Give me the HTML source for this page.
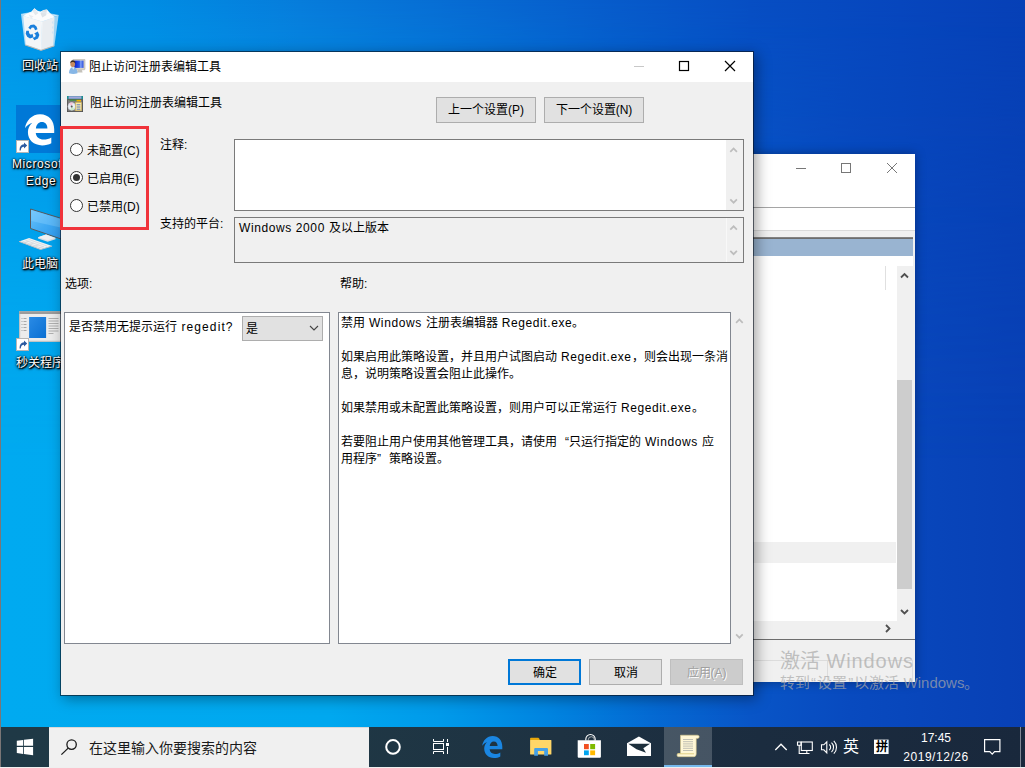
<!DOCTYPE html>
<html lang="zh-CN">
<head>
<meta charset="utf-8">
<title>阻止访问注册表编辑工具</title>
<style>
*{box-sizing:border-box;margin:0;padding:0}
html,body{width:1025px;height:768px;overflow:hidden}
body{position:relative;font-family:"Liberation Sans",sans-serif;font-size:12px;line-height:16px;color:#000;background:#0a50c0}
.abs{position:absolute}
.t{position:absolute;white-space:nowrap;line-height:16px;height:16px}
/* desktop */
#desk{position:absolute;left:0;top:0;width:1025px;height:768px;overflow:hidden;
 background:linear-gradient(90deg,#00aaf0 0,#00a8ef 330px,#009aea 440px,#0084e0 550px,#046ad3 650px,#0855c7 750px,#084abf 850px,#0840b5 1025px)}
#desk .top{position:absolute;left:0;top:0;width:1025px;height:768px;
 background:linear-gradient(90deg,#0096e8 0,#008ce3 150px,#067cdb 300px,#066cd3 450px,#065ccb 600px,#064ec3 750px,#0646bd 900px,#0640b6 1025px);
 -webkit-mask-image:linear-gradient(180deg,#000 0,rgba(0,0,0,.62) 120px,rgba(0,0,0,.2) 300px,transparent 460px);mask-image:linear-gradient(180deg,#000 0,rgba(0,0,0,.62) 120px,rgba(0,0,0,.2) 300px,transparent 460px)}
.dlabel{position:absolute;color:#fff;font-size:12px;line-height:14px;text-align:center;white-space:nowrap;
 text-shadow:1px 1px 1px #000,1px 1px 2px #000,0 0 2px #000,0 1px 3px rgba(0,0,0,.9)}
/* background window */
#bgwin{position:absolute;left:700px;top:154px;width:215px;height:528px;background:#fff;overflow:hidden;box-shadow:0 0 10px rgba(0,0,0,.35)}
/* dialog */
#dlg{position:absolute;left:60px;top:51px;width:694px;height:645px;background:#f0f0f0;background-clip:padding-box;border:1px solid rgba(8,18,30,.62);
 box-shadow:3px 3px 13px rgba(0,0,0,.36)}
#dlg .title{position:absolute;left:0;top:0;width:692px;height:30px;background:#fff}
.btn{position:absolute;height:26px;background:#e1e1e1;border:1px solid #adadad;text-align:center;line-height:24px;white-space:nowrap}
.box{position:absolute;background:#fff;border:1px solid #828790}
.radio{position:absolute;width:13px;height:13px;border:1px solid #333;border-radius:50%;background:#fff}
.radio.on:after{content:"";position:absolute;left:2px;top:2px;width:7px;height:7px;border-radius:50%;background:#333}
.sb{position:absolute;background:#f0f0f0}
.help{position:absolute;white-space:nowrap;line-height:17px}
.help div{height:17px}
.l{letter-spacing:.6px}
.q{display:inline-block;width:12px}
.wq{display:inline-block;width:7.2px;text-align:center}
.wm{position:absolute;white-space:nowrap;color:rgba(168,168,168,.7)}
/* taskbar */
#tb{position:absolute;left:1px;top:727px;width:1024px;height:40px;
 background:linear-gradient(90deg,#1f3946 0,#1f3845 300px,#1e3242 560px,#1b2c3f 760px,#19283c 1024px)}
</style>
</head>
<body>
<div id="desk"><div class="top"></div></div>

<!-- desktop icons -->
<svg class="abs" style="left:0;top:0" width="70" height="360" viewBox="0 0 70 360">
 <defs>
  <linearGradient id="scr" x1="0" y1="0" x2="1" y2="1"><stop offset="0" stop-color="#6cc4fb"/><stop offset=".5" stop-color="#3fa9f3"/><stop offset="1" stop-color="#2b95ea"/></linearGradient>
  <linearGradient id="appb" x1="0" y1="0" x2="1" y2="1"><stop offset="0" stop-color="#2a8be6"/><stop offset="1" stop-color="#0a6fd2"/></linearGradient>
 </defs>
 <!-- recycle bin -->
 <g>
  <path d="M21 14.300L37 11.400L58.600 15.400L42.100 20.600Z" fill="#e3f2fc" fill-opacity=".85"/>
  <path d="M21 14.300L42.100 20.600L41 50.500L24.900 44.900Z" fill="#d4ebfb" fill-opacity=".8"/>
  <path d="M42.100 20.600L58.600 15.400L54.400 45.900L41 50.500Z" fill="#c4e3f8" fill-opacity=".8"/>
  <path d="M23.300 16L42 21.500L41 49.800L25.800 44.600Z" fill="#f4f6f8"/>
  <path d="M42 21.500L54.500 17.300L53.300 45.500L41 49.800Z" fill="#e9edf1"/>
  <path d="M53.500 20l-1.800 2.500l1.800 2.500l-1.800 2.500l1.800 2.500l-1.800 2.500l1.800 2.500v-15z" fill="#cfe4f4"/>
  <path d="M23.300 16L26.500 13.800L31.500 11.500L34.500 8.200L37.200 10.600L40.200 11.800L43.200 10.200L47 9.600L50 13L54.500 17.300L42 21.500Z" fill="#fbfcfd"/>
  <path d="M32.500 10.800L34.500 8.200L38.300 13.200L35.300 15.200Z" fill="#e3e8ec"/>
  <path d="M43.200 10L47 9.600L46.200 15.200L42.300 17.400L40.500 13.500Z" fill="#dde3e8"/>
  <path d="M28.500 14.500l5 1.800l-2.500 2.200z" fill="#e8ecf0"/>
  <path d="M21 14.300L37 11.400L58.600 15.400" stroke="#e6f3fc" stroke-opacity=".8" stroke-width=".7" fill="none"/>
  <path d="M42.100 21.500L41 50" stroke="#fff" stroke-opacity=".7" stroke-width=".7"/>
  <path d="M25 44.900L41 50.400L54.400 45.900" stroke="#cdb7a6" stroke-width=".9" fill="none"/>
  <g fill="#1a7fdc">
   <path d="M28.300 27.800l2.200-2.800l3.600-.4l2.400 2l1 2.600l-2.400 1l-1.200-2.400l-2-.2l-1.400 1.800z"/>
   <path d="M37.800 31.500l1.600 3.400l-1.400 3.600l-3.600 1.700l-1.800-2.400l2.600-.9l.6-1.900l-1.600-1.600z"/>
   <path d="M26.300 30.700l2.500.1l.4 2.400l1.600 1.500l1.700-.9l.9 3.400l-3.400 1.300l-2.800-1.800l-1.500-3z"/>
  </g>
 </g>
 <!-- edge tile -->
 <rect x="16" y="105" width="48" height="48" fill="#0078d7"/>
 <path fill="#fff" fill-rule="evenodd" transform="translate(25 114.300) scale(1.453 1.414) translate(-482.200 -736)" d="M482.200 745.800C483 740.500 487 736 492.600 736C498.600 736 502.300 740.600 502.300 746.600V749.300H489.600C489.900 752.300 492 753.900 495 753.900C497 753.900 498.800 753.400 500.300 752.400V756.500C498.600 757.500 496.400 758 494 758C488.200 758 484.200 754.300 484.200 748.600C484.200 745.800 485.300 743.600 487.200 741.900C485 742.600 483.300 744 482.200 745.800ZM489.700 746H497.600C497.600 743.300 496.200 741.500 493.800 741.500C491.600 741.500 490 743.300 489.700 746Z"/>
 <rect x="16.500" y="140.500" width="12" height="12" fill="#fff" stroke="#b5b5b5" stroke-width="1"/>
 <path d="M19.500 150.500c0-4 1.500-6 4.500-6.200v-1.800l3.200 3l-3.200 3v-1.800c-1.800 0-3 .9-3.300 3.800z" fill="#2c5aa0"/>
 <!-- this pc -->
 <path d="M30.500 209L64 219.200V240L30.500 228.500Z" fill="url(#scr)" stroke="#565a5e" stroke-width="1"/>
 <path d="M31.200 210L63 219.800V228L31.200 221Z" fill="#8fd3ff" fill-opacity=".35"/>
 <path d="M38 237.300l8-2.800l9.500 3.400v1.300l-7.800 2.500l-9.700-3.200z" fill="#d9dde1"/>
 <path d="M38 237.300l8-2.800l9.500 3.400l-7.800 2.400z" fill="#eef0f2"/>
 <path d="M19 241.400L29.100 238L52.100 246.100L40.600 249.500Z" fill="#eef1f3"/>
 <path d="M19 241.400L40.600 249.500L52.100 246.100" stroke="#b8bec4" stroke-width="1" fill="none"/>
 <path d="M22.500 241.300l18.500 6.700M25.500 240.300l18.500 6.700M28.500 239.300l18.500 6.700M24 242.800l4.500-1.500M29 244.600l4.500-1.500M34 246.400l4.500-1.500M39 248.200l4.500-1.500" stroke="#c9cfd4" stroke-width=".6"/>
 <!-- app icon -->
 <rect x="19.200" y="311.200" width="44" height="30.600" fill="#ececec"/>
 <rect x="19.200" y="311.200" width="44" height="2.800" fill="#9b9b9b"/>
 <path d="M19.700 314v27.300h43" stroke="#bdbdbd" stroke-width="1" fill="none"/>
 <rect x="29.100" y="317" width="17" height="21" fill="url(#appb)"/>
 <path d="M21.500 318.500h5M21.500 321.500h5M21.500 324.500h5M21.500 327.500h5M21.500 330.500h5" stroke="#a9a9a9" stroke-width="1" stroke-dasharray="1 1 4 0"/>
 <path d="M48.500 318.500h10M48.500 321h10M48.500 323.500h10M48.500 326h10M48.500 328.500h10M48.500 331h10M48.500 333.500h5" stroke="#a9a9a9" stroke-width=".9"/>
 <rect x="16.500" y="338.500" width="12" height="12" fill="#fff" stroke="#b5b5b5" stroke-width="1"/>
 <path d="M19.500 348.500c0-4 1.500-6 4.500-6.200v-1.800l3.200 3l-3.200 3v-1.800c-1.800 0-3 .9-3.300 3.800z" fill="#2c5aa0"/>
</svg>
<!-- desktop icon labels -->
<div class="dlabel" style="left:0;top:59px;width:80px">回收站</div>
<div class="dlabel" style="left:-2px;top:157px;width:82px;letter-spacing:.6px">Microsoft</div>
<div class="dlabel" style="left:0;top:174px;width:82px;letter-spacing:.6px">Edge</div>
<div class="dlabel" style="left:0;top:257px;width:80px">此电脑</div>
<div class="dlabel" style="left:0;top:356px;width:80px">秒关程序</div>

<!-- background MMC window -->
<div id="bgwin">
 <svg class="abs" style="left:0;top:0" width="215" height="30" viewBox="0 0 215 30">
  <path d="M96 14.5h10" stroke="#777" stroke-width="1" fill="none"/>
  <rect x="141.5" y="9.5" width="9" height="9" stroke="#777" stroke-width="1" fill="none"/>
  <path d="M187 9l10 10M197 9l-10 10" stroke="#777" stroke-width="1" fill="none"/>
 </svg>
 <div class="abs" style="left:0;top:53px;width:215px;height:1px;background:#a5a5a5"></div>
 <div class="abs" style="left:0;top:76px;width:215px;height:1px;background:#dadada"></div>
 <div class="abs" style="left:0;top:77px;width:215px;height:7px;background:#f0f0f0"></div>
 <div class="abs" style="left:0;top:83px;width:213px;height:1px;background:#828282"></div>
 <div class="abs" style="left:0;top:84px;width:213px;height:1px;background:#6d6d6d"></div>
 <div class="abs" style="left:0;top:85px;width:213px;height:17px;background:#99b4d1"></div>
 <div class="abs" style="left:213px;top:77px;width:2px;height:450px;background:#f0f0f0"></div>
 <div class="abs" style="left:185px;top:112px;width:1px;height:24px;background:#e0e0e0"></div>
 <!-- v scrollbar -->
 <div class="abs" style="left:197px;top:112px;width:16px;height:355px;background:#f0f0f0"></div>
 <div class="abs" style="left:197px;top:226px;width:15px;height:209px;background:#cdcdcd"></div>
 <svg class="abs" style="left:197px;top:112px" width="16" height="355" viewBox="0 0 16 355"><path d="M4 11.5l3.5-3.5l3.5 3.5M4 344l3.5 3.5l3.5-3.5" stroke="#505050" stroke-width="1.8" fill="none"/></svg>
 <div class="abs" style="left:0;top:388px;width:196px;height:21px;background:#f0f0f0"></div>
 <!-- h scrollbar -->
 <div class="abs" style="left:0;top:467px;width:215px;height:18px;background:#f0f0f0"></div>
 <svg class="abs" style="left:183px;top:468px" width="12" height="14" viewBox="0 0 12 14"><path d="M3 3l3.5 3.5l-3.5 3.5" stroke="#505050" stroke-width="1.8" fill="none"/></svg>
 <div class="abs" style="left:0;top:485px;width:215px;height:1px;background:#6d6d6d"></div>
 <div class="abs" style="left:0;top:486px;width:215px;height:42px;background:#f0f0f0"></div>
 <div class="abs" style="left:0;top:506px;width:213px;height:1px;background:#dcdcdc"></div>
 <div class="abs" style="left:127px;top:506px;width:1px;height:21px;background:#dcdcdc"></div>
 <div class="abs" style="left:212px;top:506px;width:1px;height:21px;background:#dcdcdc"></div>
</div>

<!-- dialog -->
<div id="dlg">
 <div class="title"></div>
 <div class="t" style="left:28px;top:7px">阻止访问注册表编辑工具</div>
 <!-- title icon (user + monitor) -->
 <svg class="abs" style="left:8px;top:7px" width="17" height="16" viewBox="69 59 17 16">
  <defs><linearGradient id="tsc" x1="0" y1="0" x2="1" y2="0"><stop offset="0" stop-color="#0a1fd0"/><stop offset=".55" stop-color="#2a55e8"/><stop offset=".7" stop-color="#7fa0f5"/><stop offset="1" stop-color="#2448dc"/></linearGradient></defs>
  <rect x="72.800" y="59.200" width="12.200" height="10.600" rx=".8" fill="#d6d3cb" stroke="#a9a69d" stroke-width=".5"/>
  <rect x="74.200" y="60.600" width="9.300" height="7.300" fill="url(#tsc)"/>
  <path d="M77.600 69.800h4.200l.8 2.600h-5.800z" fill="#c4c2bb"/>
  <path d="M69 73.300c0-3.700 1.600-6 4.200-6.500c2.700.5 4.300 2.800 4.300 6.500q-4.200 1.400-8.500 0z" fill="#86b6e6"/>
  <path d="M72 67.300l1.200 2.500l1.300-2.500z" fill="#e8f1fb"/>
  <ellipse cx="72.700" cy="64.100" rx="2.400" ry="2.900" fill="#c78b5e"/>
  <path d="M70.200 63.600c0-2.200 1.200-3.300 2.700-3.300c1.600 0 2.600 1.200 2.500 3.100c-.8-1-2-1.500-3.100-1.400c-.9.100-1.700.7-2.100 1.600z" fill="#3a2a20"/>
 </svg>
 <!-- policy icon -->
 <svg class="abs" style="left:6px;top:44px" width="16" height="16" viewBox="67 96 16 16">
  <rect x="67" y="96" width="16" height="3.200" fill="#1d8c8c"/>
  <rect x="68.600" y="96.300" width="12.800" height="2.400" fill="#a4a4dc"/>
  <rect x="67.400" y="99.600" width="15.200" height="12" fill="#7c7c7c" stroke="#4e4e4e" stroke-width=".9"/>
  <rect x="69.500" y="99.600" width="11" height="1.100" fill="#3b9a3b"/>
  <rect x="76.500" y="99.900" width="4.500" height="1.600" fill="#f2b400"/>
  <circle cx="71.700" cy="106.400" r="3.800" fill="#e6f0f4" stroke="#b8b8c8" stroke-width=".5"/>
  <path d="M71.700 106.400L69 103.800A3.800 3.800 0 0 1 73 102.800Z" fill="#f4c6dc"/>
  <path d="M71.700 106.400L74.500 109A3.800 3.800 0 0 1 70.400 110Z" fill="#c9ecc9"/>
  <circle cx="71.700" cy="106.400" r="1" fill="#555"/>
  <rect x="75.400" y="102.400" width="6.200" height="8.400" fill="#fbe9a6" stroke="#c9a94a" stroke-width=".5"/>
  <path d="M76.600 104.800h3.800M76.600 107h3.800M76.600 109.200h3.800" stroke="#4a6fc4" stroke-width=".9"/>
 </svg>
 <!-- caption buttons -->
 <svg class="abs" style="left:560px;top:0" width="131" height="30" viewBox="0 0 131 30">
  <path d="M13 14.5h10" stroke="#c8c8c8" stroke-width="1" fill="none"/>
  <rect x="58.5" y="9.5" width="9" height="9" stroke="#000" stroke-width="1.2" fill="none"/>
  <path d="M104 9l10 10M114 9l-10 10" stroke="#000" stroke-width="1.2" fill="none"/>
 </svg>
 <div class="t" style="left:29px;top:43px">阻止访问注册表编辑工具</div>
 <div class="btn" style="left:375px;top:45px;width:100px">上一个设置(P)</div>
 <div class="btn" style="left:483px;top:45px;width:100px">下一个设置(N)</div>
 <!-- radios -->
 <div class="radio" style="left:9px;top:91px"></div><div class="t" style="left:26px;top:91px">未配置(C)</div>
 <div class="radio on" style="left:9px;top:119px"></div><div class="t" style="left:26px;top:119px">已启用(E)</div>
 <div class="radio" style="left:9px;top:147px"></div><div class="t" style="left:26px;top:147px">已禁用(D)</div>
 <div class="t" style="left:99px;top:85px">注释:</div>
 <div class="box" style="left:173px;top:87px;width:510px;height:72px;border-color:#7a7a7a">
  <div class="sb" style="right:0;top:0;width:17px;height:70px">
   <svg width="17" height="70" viewBox="0 0 17 70"><path d="M4.3 11.9L7.6 8.5L10.9 11.9M4.3 59.3L7.6 62.7L10.9 59.3" stroke="#bdbdbd" stroke-width="1.7" fill="none"/></svg>
  </div>
 </div>
 <div class="t" style="left:99px;top:164px">支持的平台:</div>
 <div class="box" style="left:173px;top:165px;width:510px;height:46px;background:#f0f0f0;border-color:#7a7a7a">
  <div class="sb" style="right:0;top:0;width:17px;height:44px;box-shadow:inset 1px 0 #f8f8f8">
   <svg width="17" height="44" viewBox="0 0 17 44"><path d="M4.3 11.7L7.6 8.3L10.9 11.7M4.3 32.8L7.6 36.2L10.9 32.8" stroke="#bdbdbd" stroke-width="1.7" fill="none"/></svg>
  </div>
 </div>
 <div class="t" style="left:178px;top:168px"><span class="l">Windows 2000 </span>及以上版本</div>
 <div class="t" style="left:4px;top:224px">选项:</div>
 <div class="t" style="left:279px;top:224px">帮助:</div>
 <div class="box" style="left:3px;top:260px;width:266px;height:332px"></div>
 <div class="t" style="left:8px;top:267px">是否禁用无提示运行<span class="l" style="letter-spacing:1.1px"> regedit?</span></div>
 <div class="abs" style="left:181px;top:264px;width:81px;height:25px;background:#e1e1e1;border:1px solid #adadad"></div>
 <div class="t" style="left:185px;top:269px">是</div>
 <svg class="abs" style="left:248px;top:272px" width="10" height="8" viewBox="0 0 10 8"><path d="M1 2l4 4l4-4" stroke="#444" stroke-width="1.1" fill="none"/></svg>
 <div class="box" style="left:277px;top:260px;width:393px;height:332px"></div>
 <svg class="abs" style="left:670px;top:260px" width="17" height="331" viewBox="0 0 17 331"><path d="M5.1 10.9L8.4 7.5L11.7 10.9M5.1 322.3L8.4 325.7L11.7 322.3" stroke="#bdbdbd" stroke-width="1.7" fill="none"/></svg>
 <div class="help" style="left:280px;top:263px">
  <div>禁用<span class="l"> Windows </span>注册表编辑器<span class="l"> Regedit.exe</span>。</div>
  <div>&nbsp;</div>
  <div>如果启用此策略设置，并且用户试图启动<span class="l"> Regedit.exe</span>，则会出现一条消</div>
  <div>息，说明策略设置会阻止此操作。</div>
  <div>&nbsp;</div>
  <div>如果禁用或未配置此策略设置，则用户可以正常运行<span class="l"> Regedit.exe</span>。</div>
  <div>&nbsp;</div>
  <div>若要阻止用户使用其他管理工具，请使用<span class="q" style="text-align:right">“</span>只运行指定的<span class="l"> Windows </span>应</div>
  <div>用程序<span class="q" style="text-align:left">”</span>策略设置。</div>
 </div>
 <div class="btn" style="left:447px;top:607px;width:73px;border:2px solid #0078d7;line-height:22px;padding-top:1px">确定</div>
 <div class="btn" style="left:528px;top:607px;width:73px;padding-top:1px">取消</div>
 <div class="btn" style="left:609px;top:607px;width:73px;background:#cccccc;border-color:#bfbfbf;color:#a0a0a0;text-shadow:1px 1px 0 #fff;padding-top:1px">应用(A)</div>
</div>
<!-- red annotation box -->
<div class="abs" style="left:60px;top:126px;width:89px;height:104px;border:3px solid #f0333a"></div>

<!-- activation watermark -->
<div class="wm" style="left:780px;top:649px;font-size:20px;line-height:24px;height:24px">激活<span style="letter-spacing:.9px"> Windows</span></div>
<div class="wm" style="left:780px;top:673px;font-size:15px;line-height:20px;height:20px">转到<span class="wq">“</span>设置<span class="wq">”</span>以激活 Windows。</div>
<!-- taskbar -->
<div id="tb">
 <div class="abs" style="left:48px;top:0;width:320px;height:40px;background:#f0f0f0;border-top:1px solid #d9d9d9"></div>
 <div class="t" style="left:88px;top:12px;font-size:14px;line-height:18px;height:18px;color:#1a1a1a">在这里输入你要搜索的内容</div>
 <div class="abs" style="left:663px;top:0;width:48px;height:40px;background:rgba(255,255,255,.19)"></div>
 <div class="abs" style="left:663px;top:38px;width:48px;height:2px;background:#76b9ed"></div>
 <svg class="abs" style="left:0;top:0" width="1024" height="40" viewBox="1 727 1024 40">
  <!-- start -->
  <g fill="#fff">
   <path d="M16.8 740.7L23.1 739.9V745.7H16.8Z"/><path d="M23.9 739.8L33.1 738.7V745.7H23.9Z"/>
   <path d="M16.8 747H23.1V754L16.8 752.9Z"/><path d="M23.9 747H33.1V755.3L23.9 754.1Z"/>
  </g>
  <!-- search icon -->
  <g stroke="#1a1a1a" stroke-width="1.3" fill="none"><circle cx="71.6" cy="744.6" r="4.7"/><path d="M68.2 748.1L61.4 754.6"/></g>
  <!-- cortana -->
  <circle cx="393" cy="746.9" r="6.8" stroke="#fff" stroke-width="2" fill="none"/>
  <!-- task view -->
  <g stroke="#fff" stroke-width="1" fill="none"><path d="M433.500 739v2.500h10v-2.500M433.500 754v-2.500h10v2.500M447.500 739v3M447.500 747v7"/><rect x="433.500" y="743.500" width="10" height="6"/></g>
  <rect x="446" y="743" width="3" height="3" fill="#fff"/>
  <!-- edge -->
  <path fill="#1a86e2" fill-rule="evenodd" d="M482.200 745.800C483 740.500 487 736 492.600 736C498.600 736 502.300 740.600 502.300 746.600V749.300H489.600C489.900 752.300 492 753.900 495 753.900C497 753.900 498.800 753.400 500.300 752.400V756.500C498.600 757.500 496.400 758 494 758C488.200 758 484.200 754.300 484.200 748.600C484.200 745.800 485.300 743.600 487.200 741.900C485 742.600 483.300 744 482.200 745.800ZM489.700 746H497.600C497.600 743.300 496.200 741.500 493.800 741.500C491.600 741.500 490 743.300 489.700 746Z"/>
  <!-- explorer -->
  <path fill="#e8a80c" d="M530.100 738.600q0-.8.800-.8h7.500l1.200 1.300v1.600h-9.500z"/>
  <rect x="530.100" y="740.100" width="21.300" height="14.500" rx=".5" fill="#ffd668"/>
  <path fill="#45a0e6" d="M534.200 749q0-1.100 1.100-1.100h11.600q1.100 0 1.100 1.100v6.800h-3.800v-4.900h-6.300v4.900h-3.700z"/>
  <!-- store -->
  <path d="M585.800 740.500v-1.300a4.700 4.700 0 0 1 9.400 0v1.300" stroke="#fff" stroke-width="1.100" fill="none"/>
  <path d="M588.300 740.500v-.8a3 3 0 0 1 6 0v.8" stroke="#c9c9c9" stroke-width=".8" fill="none"/>
  <path fill="#fff" d="M577.700 740.300h23.200v16.500q0 1-1 1h-21.200q-1 0-1-1z"/>
  <rect x="584" y="744" width="4.800" height="5.200" fill="#f25022"/><rect x="590.200" y="744" width="4.900" height="5.200" fill="#7fba00"/>
  <rect x="584" y="750.400" width="4.800" height="4.800" fill="#00a4ef"/><rect x="590.200" y="750.400" width="4.900" height="4.800" fill="#ffb900"/>
  <!-- mail -->
  <path fill="#fff" d="M627 743.300L638.900 736.600L651 743.300V755.900H627Z"/>
  <path fill="#1d2f3c" d="M628.300 743.700H650L643.300 748.300L646 752.800L636.500 749.200Z"/>
  <!-- scroll (active app) -->
  <path fill="#fff7d6" stroke="#d8c98a" stroke-width=".6" d="M680.500 735.200h17q1.700 0 1.700 1.600t-1.700 1.600h-1.300v15.500q0 2.800-2.600 2.800h-15.100q-1.500 0-1.500-1.600t1.500-1.600h2z"/>
  <path d="M683 739.500h10M683 741.700h10M683 743.900h10M683 746.100h10M683 748.300h10M683 750.500h10" stroke="#b9b9b0" stroke-width=".9"/>
  <path d="M677.600 753.800h16.500" stroke="#e0cf85" stroke-width="1"/>
  <!-- tray chevron -->
  <path d="M775.300 750L781 744.200L786.700 750" stroke="#fff" stroke-width="1.300" fill="none"/>
  <!-- network -->
  <g stroke="#fff" stroke-width="1.100" fill="none"><rect x="801.300" y="742" width="11" height="8.500"/><path d="M806.800 750.500v3M802 753.500h7.500M797.500 742h3.500v3.300h-3.500zM799.200 745.300v8.200h3"/></g>
  <!-- volume -->
  <g stroke="#fff" stroke-width="1.100" fill="none"><path d="M821.500 744.800h2.300l3-3v11l-3-3h-2.300z"/><path d="M829.300 744.500a3.600 3.600 0 0 1 0 5.600M831.500 742.600a6.400 6.400 0 0 1 0 9.400M833.800 740.900a9 9 0 0 1 0 12.800"/></g>
  <!-- ime box -->
  <rect x="874" y="739.600" width="14.600" height="14.400" fill="#fff"/>
  <!-- notification -->
  <path d="M984.600 739.600h15.300v12h-5.300l-2.400 2.600l-2.400-2.600h-5.200z" stroke="#fff" stroke-width="1.200" fill="none"/>
  <rect x="1020" y="727" width="1" height="40" fill="#7f8794"/>
 </svg>
 <div class="t" style="left:842px;top:10px;font-size:16px;line-height:20px;height:20px;color:#fff">英</div>
 <div class="t" style="left:873px;top:11px;font-size:12px;line-height:18px;height:18px;color:#000;width:15px;text-align:center;font-weight:bold">拼</div>
 <div class="t" style="left:885px;top:3px;width:100px;text-align:center;color:#fff;font-size:12px">17:45</div>
 <div class="t" style="left:885px;top:22px;width:100px;text-align:center;color:#fff;font-size:12px;letter-spacing:.55px">2019/12/26</div>
</div>
<div class="abs" style="left:0;top:0;width:1px;height:768px;background:#7a7676"></div>
<div class="abs" style="left:0;top:767px;width:1025px;height:1px;background:#efefef"></div>
</body>
</html>
